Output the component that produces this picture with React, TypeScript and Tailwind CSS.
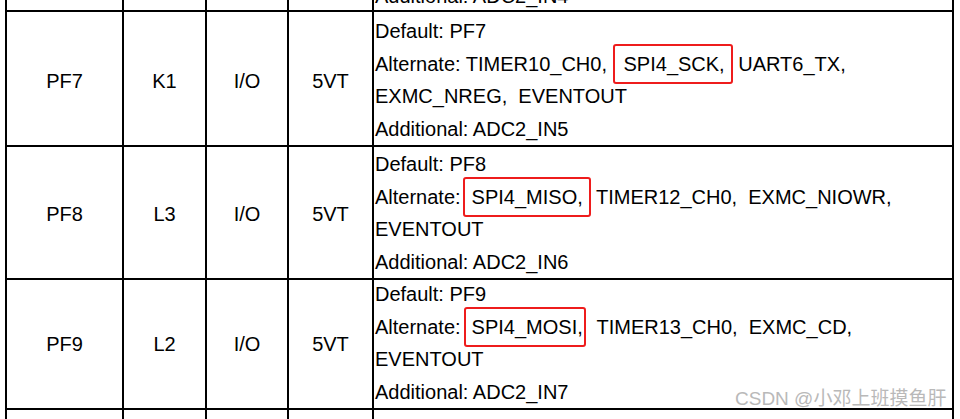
import type { ReactNode } from "react";

interface PinRow {
  pin: string;
  ball: string;
  type: string;
  level: string;
  height: string;
  lines: ReactNode[];
}

function Mark({ children, className }: { children: ReactNode; className: string }) {
  return (
    <span className={`relative ${className}`}>
      <span className="absolute inset-x-0 -top-[9px] -bottom-[9px] rounded-[3px] border-2 border-[#ee1c1c]" />
      {children}
    </span>
  );
}

const rows: PinRow[] = [
  {
    pin: "PF7",
    ball: "K1",
    type: "I/O",
    level: "5VT",
    height: "h-[133px]",
    lines: [
      "Default: PF7",
      <>
        Alternate: TIMER10_CH0, <Mark className="pl-[11px] pr-[8px]">SPI4_SCK,</Mark> UART6_TX,
      </>,
      <>EXMC_NREG,&nbsp; EVENTOUT</>,
      "Additional: ADC2_IN5",
    ],
  },
  {
    pin: "PF8",
    ball: "L3",
    type: "I/O",
    level: "5VT",
    height: "h-[130px]",
    lines: [
      "Default: PF8",
      <>
        Alternate:<Mark className="ml-[2px] pl-[9px] pr-[8px]">SPI4_MISO,</Mark> TIMER12_CH0,&nbsp; EXMC_NIOWR,
      </>,
      "EVENTOUT",
      "Additional: ADC2_IN6",
    ],
  },
  {
    pin: "PF9",
    ball: "L2",
    type: "I/O",
    level: "5VT",
    height: "h-[134px]",
    lines: [
      "Default: PF9",
      <>
        Alternate:<Mark className="ml-[3px] pl-[8px] pr-[3px]">SPI4_MOSI,</Mark>&nbsp; TIMER13_CH0,&nbsp; EXMC_CD,
      </>,
      "EVENTOUT",
      "Additional: ADC2_IN7",
    ],
  },
];

const cols = "grid grid-cols-[117px_83px_82px_85px_582px]";
const cell = "border-l-2 border-b-2 border-black";

export default function App() {
  return (
    <div className="relative h-[419px] w-[960px] overflow-hidden bg-white font-['Liberation_Sans',Arial,sans-serif] text-[20px] text-black">
      <div className="ml-[5px] w-[949px]">
        {/* tail of the previous row */}
        <div className={`${cols} h-[12px]`}>
          <div className={cell} />
          <div className={cell} />
          <div className={cell} />
          <div className={cell} />
          <div className={`${cell} border-r-2 flex flex-col justify-end overflow-hidden pl-[1px]`}>
            <div className="-mb-[2px] whitespace-nowrap leading-[32.5px]">Additional: ADC2_IN4</div>
          </div>
        </div>

        {rows.map((row) => (
          <div key={row.pin} className={`${cols} ${row.height}`}>
            <div className={`${cell} flex items-center justify-center pt-[5px]`}>{row.pin}</div>
            <div className={`${cell} flex items-center justify-center pt-[5px]`}>{row.ball}</div>
            <div className={`${cell} flex items-center justify-center pt-[5px]`}>{row.type}</div>
            <div className={`${cell} flex items-center justify-center pt-[5px]`}>{row.level}</div>
            <div className={`${cell} border-r-2 pl-[1px] pt-[3px]`}>
              {row.lines.map((line, i) => (
                <div key={i} className="whitespace-nowrap leading-[32.5px]">
                  {line}
                </div>
              ))}
            </div>
          </div>
        ))}

        <div className={`${cols} h-[20px]`}>
          <div className="border-l-2 border-black" />
          <div className="border-l-2 border-black" />
          <div className="border-l-2 border-black" />
          <div className="border-l-2 border-black" />
          <div className="border-x-2 border-black" />
        </div>
      </div>

      <div className="absolute left-[735px] top-[387px] whitespace-nowrap font-['Liberation_Sans','Noto_Sans_CJK_SC',sans-serif] text-[19px] leading-[24px] text-[#b9b9b9]">
        CSDN @小邓上班摸鱼肝
      </div>
    </div>
  );
}
